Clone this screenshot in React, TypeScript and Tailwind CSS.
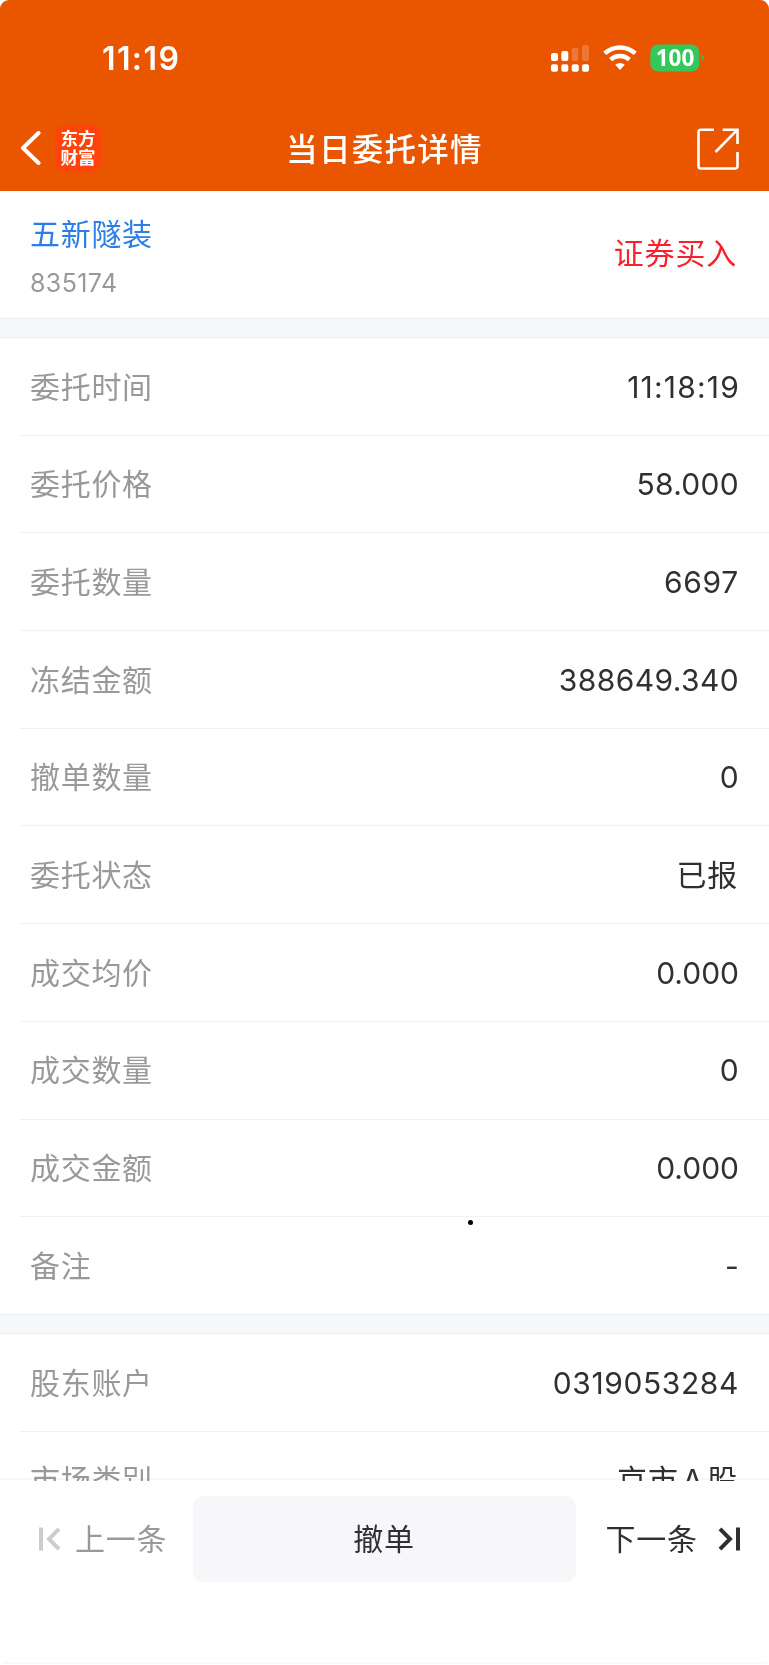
import type { ReactNode } from 'react';

type Entry = { label: string; value: ReactNode; spacing?: string };

const cjk = 'pr-[31px] tracking-[0.8px]';

const orderRows: Entry[] = [
  { label: '委托时间', value: '11:18:19', spacing: 'pr-[29px] tracking-[1.2px]' },
  { label: '委托价格', value: '58.000' },
  { label: '委托数量', value: '6697', spacing: 'pr-[30px] tracking-[0.7px]' },
  { label: '冻结金额', value: '388649.340', spacing: 'pr-[30px] tracking-[0.4px]' },
  { label: '撤单数量', value: '0' },
  { label: '委托状态', value: '已报', spacing: cjk },
  { label: '成交均价', value: '0.000', spacing: 'pr-[30px] tracking-[0px]' },
  { label: '成交数量', value: '0' },
  { label: '成交金额', value: '0.000', spacing: 'pr-[30px] tracking-[0px]' },
  { label: '备注', value: '-' },
];

const accountRows: Entry[] = [
  { label: '股东账户', value: '0319053284', spacing: 'pr-[30px] tracking-[0.6px]' },
  {
    label: '市场类别',
    value: (
      <>
        京市<span className="mx-[3.5px]">A</span>股
      </>
    ),
    spacing: cjk,
  },
];

function Row({ label, value, spacing, last }: Entry & { last?: boolean }) {
  return (
    <div className="h-[97.7px] shrink-0 pl-5">
      <div
        className={`flex h-full items-center justify-between border-b pl-[10px] pt-[0.6px] ${
          last ? 'border-transparent' : 'border-[#f2f2f3]'
        }`}
      >
        <span className="text-[30px] tracking-[0.7px] text-[#999]">{label}</span>
        <span className={`text-[30px] text-[#2f3033] ${spacing ?? 'pr-[30px] tracking-[0.3px]'}`}>{value}</span>
      </div>
    </div>
  );
}

function Gap({ className = '' }: { className?: string }) {
  return <div className={`h-5 shrink-0 border-y border-[#eeeff1] bg-[#f6f7f9] ${className}`} />;
}

function StatusIcons() {
  return (
    <svg width="156" height="28" viewBox="0 0 156 28" fill="none">
      <g fill="#fff">
        <rect x="1" y="9" width="7" height="8" rx="2" />
        <rect x="11.3" y="7" width="7" height="10" rx="2" />
        <rect x="21.7" y="4" width="6.6" height="13" rx="2" fillOpacity=".2" />
        <rect x="32" y="1" width="7" height="16" rx="2" fillOpacity=".2" />
        <rect x="1" y="20.3" width="7" height="7.4" rx="2" />
        <rect x="11.3" y="20.3" width="7" height="7.4" rx="2" />
        <rect x="21.7" y="20.3" width="7" height="7.4" rx="2" />
        <rect x="32" y="20.3" width="7" height="7.4" rx="2" />
      </g>
      <path d="M54.8 9.4a22.4 22.4 0 0 1 30.4 0" stroke="#fff" strokeWidth="4.6" />
      <path d="M60.6 15.7a13.8 13.8 0 0 1 18.8 0" stroke="#fff" strokeWidth="4.4" />
      <path d="M65.2 20.8a7.2 7.2 0 0 1 9.6 0L70 26Z" fill="#fff" />
      <rect x="100.3" y="0.5" width="49" height="27" rx="8" fill="#34c759" />
      <path d="M151.2 10.5q2.8 1 2.8 3.5t-2.8 3.5Z" fill="#45b54a" />
      <text
        x="125"
        y="22"
        textAnchor="middle"
        fill="#fff"
        fontSize="22.5"
        fontWeight="700"
        fontFamily="'Noto Sans', sans-serif"
      >
        100
      </text>
    </svg>
  );
}

function ShareIcon() {
  return (
    <svg width="42" height="42" viewBox="0 0 42 42" fill="none" stroke="#fff" strokeWidth="2.6">
      <path d="M17 1.7H4Q1.5 1.7 1.5 4.2V38Q1.5 40.5 4 40.5H38Q40.5 40.5 40.5 38V24" />
      <path d="M25.7 1.7H40.5V16" />
      <path d="M40 2.2 18.5 24" />
    </svg>
  );
}

export default function App() {
  return (
    <div className="flex h-[1665px] w-[769px] flex-col overflow-hidden bg-white font-['Inter','Noto_Sans_CJK_SC',sans-serif] leading-none">
      <header className="flex h-[191px] shrink-0 flex-col rounded-t-[9px] bg-[#ea5500] text-white">
        <div className="flex h-[115px] items-center justify-between pl-[102px] pr-[63px]">
          <span className="pt-[2px] text-[32px] font-semibold tracking-[1.4px]">11:19</span>
          <StatusIcons />
        </div>
        <div className="grid h-[66px] grid-cols-[1fr_auto_1fr] items-center pl-5 pr-[30px]">
          <div className="flex items-center gap-[14px]">
            <svg width="21" height="34" viewBox="0 0 21 34" fill="none">
              <path
                d="M18.5 2 3 17 18.5 32"
                stroke="#fff"
                strokeWidth="4"
                strokeLinecap="round"
                strokeLinejoin="round"
              />
            </svg>
            <div className="flex h-[46px] w-[46px] flex-col items-center justify-center rounded-[9px] bg-[#ff430b] text-[17.5px] font-bold leading-[19px]">
              <span>东方</span>
              <span>财富</span>
            </div>
          </div>
          <h1 className="pl-[10px] pt-[3px] text-[31.5px] font-medium tracking-[1.3px]">当日委托详情</h1>
          <div className="flex justify-end pt-[2px]">
            <ShareIcon />
          </div>
        </div>
      </header>

      <main className="relative flex h-[1290px] shrink-0 flex-col overflow-hidden">
        <section className="flex h-[127px] shrink-0 items-center justify-between pl-[30px] pr-8">
          <div className="flex flex-col gap-[22px] pt-[5px]">
            <span className="text-[30px] tracking-[0.7px] text-[#2b7ee6]">五新隧装</span>
            <span className="text-[25px] tracking-[0.4px] text-[#999]">835174</span>
          </div>
          <span className="pb-[3px] text-[30px] tracking-[0.8px] text-[#f5222d]">证券买入</span>
        </section>
        <Gap />
        {orderRows.map((row, i) => (
          <Row key={row.label} {...row} last={i === orderRows.length - 1} />
        ))}
        <Gap className="-mt-px" />
        {accountRows.map((row) => (
          <Row key={row.label} {...row} />
        ))}
        <div className="absolute bottom-[1px] left-0 h-[2px] w-full bg-[#f7f7f8] mix-blend-multiply" />
        <div className="absolute left-[468px] top-[1028.5px] h-[5px] w-[5px] rounded-full bg-black" />
      </main>

      <footer className="flex flex-1 flex-col justify-between pt-[15px]">
        <div className="flex h-[86px] items-center">
          <button className="flex w-[192.5px] items-center gap-[14px] pl-[39px] text-[30px] tracking-[0.8px] text-[#999]">
            <svg width="22" height="24" viewBox="0 0 22 24" fill="none" stroke="#ccc" strokeWidth="4">
              <path d="M2 .5v23M20 1.8 10 12l10 10.2" />
            </svg>
            上一条
          </button>
          <button className="h-full w-[383px] rounded-[10px] bg-[#f7f7fa] text-[30px] tracking-[0.8px] text-[#2f3033]">
            撤单
          </button>
          <button className="flex flex-1 items-center justify-between pl-[30px] pr-[29px] text-[30px] tracking-[0.8px] text-[#2f3033]">
            下一条
            <svg width="22" height="24" viewBox="0 0 22 24" fill="none" stroke="#2f3033" strokeWidth="4">
              <path d="M20 .5v23M2 1.8 12 12 2 22.2" />
            </svg>
          </button>
        </div>
        <div className="mx-[3px] mb-px h-[2px] bg-[#f9f9f9]" />
      </footer>
    </div>
  );
}
